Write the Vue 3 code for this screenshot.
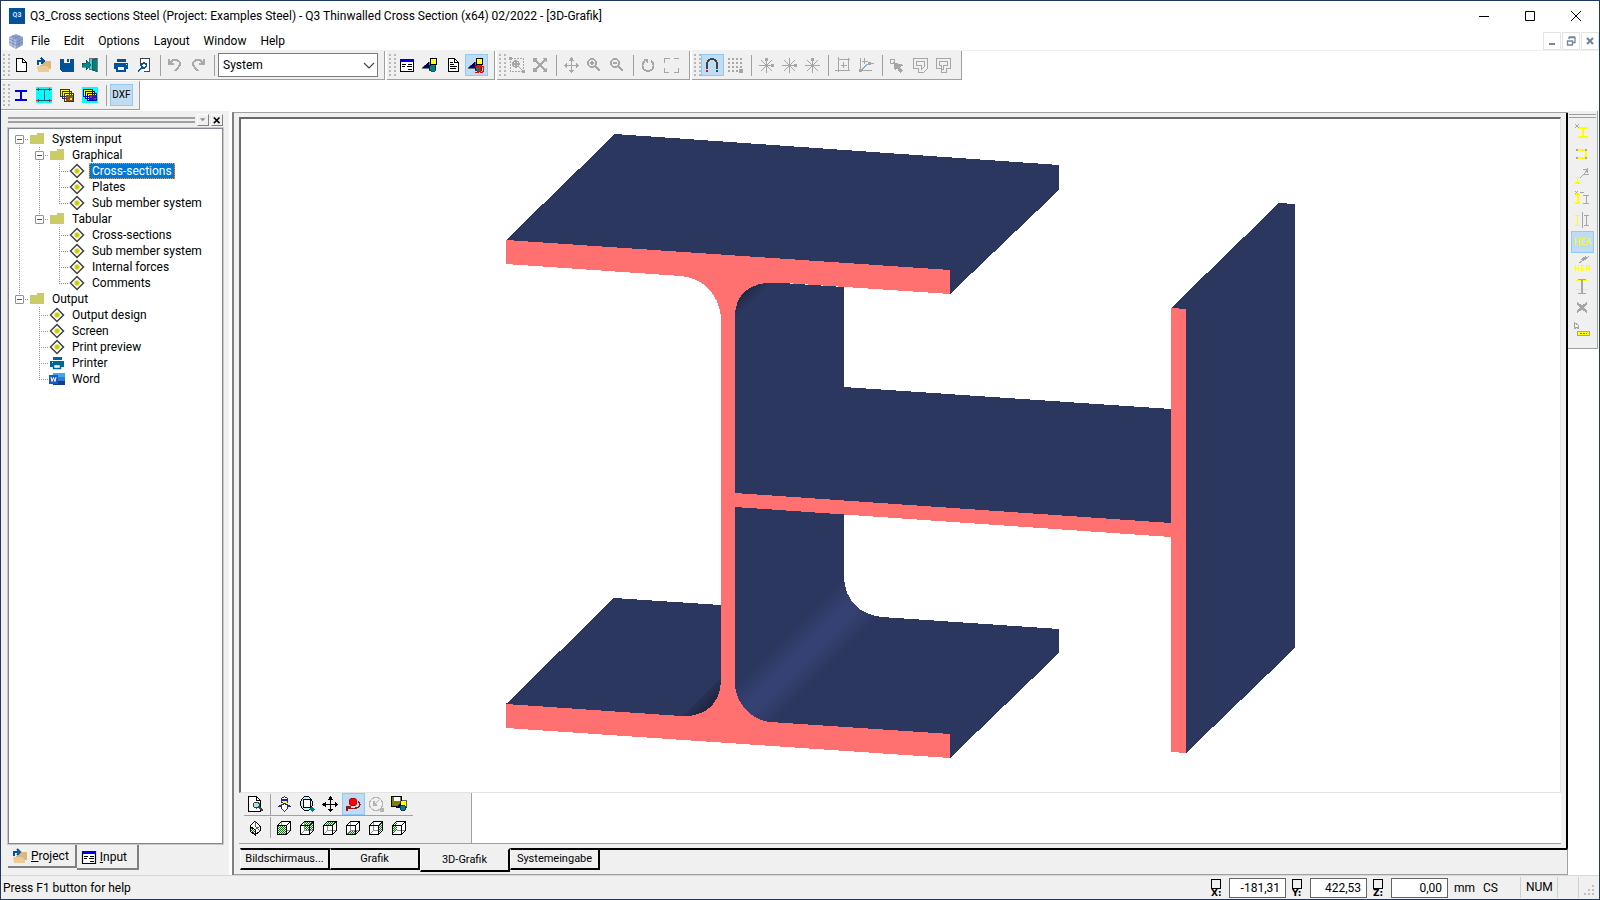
<script setup>
import { ref, h } from 'vue'

const G = '#a6a6a6'
const BLUE = '#00529b'
const YEL = '#ffff00'
const HATCH = 'url(#hatch)'

// every icon is a list of [path, fill, stroke, stroke width, dash] on a 16x16 grid
const cube = face => [
   ['M1.5 5.5l4-4h9v9l-4 4h-9z', '#fff', 'none'],
   ['M5.5 1.5v9h9M5.5 10.5l-4 4', 'none', '#909090'],
   [face, HATCH, 'none'],
   ['M1.5 5.5h9v9h-9zM1.5 5.5l4-4h9l-4 4M14.5 1.5v9l-4 4', 'none', '#000'],
]
const shapes = [
   ['M8.5 1.5h6v6h-6z', YEL, '#000'],
   ['M9 2h1v1h-1zM11 2h1v1h-1zM13 2h1v1h-1zM10 4h1v1h-1zM12 4h1v1h-1z', '#fff'],
   ['M0 11L7 5v6z', '#000080', '#000', 0.5],
   ['M7 11a3.5 3.5 0 1 0 7 0a3.5 3.5 0 1 0-7 0', '#008080', '#000', 0.7],
]
const star = [['M8.5 1v15M1 8.5h15M3 3l11 11M14 3L3 14', 'none', G]]

const icons = {
   doc: [
      ['M1 4l7-3 7 3v8l-7 4-7-4z', '#8fa3cc'],
      ['M1 4l7 3v9l-7-4z', '#b4c2df'],
      ['M1 6l7 3 7-3M1 9l7 3 7-3M4 2.5l7 3v8.5M12 3L5 6v8.5', 'none', '#6d83b4', 0.7],
   ],
   new: [['M3.5 1.5h6l4 4v9h-10z', '#fff', '#000', 1.2], ['M9.5 1.5v4h4', 'none', '#000', 1.2]],
   open: [
      ['M6 5h3V4h6v8H4V8h2z', '#deb77a'],
      ['M1 9h9l3 3v3H2z', '#eccb98'],
      ['M2 8V4h4M5 1l3 3-3 3', 'none', BLUE, 2],
   ],
   save: [['M1 2h14v13H3l-2-2z', BLUE], ['M5 1h6v5H5z', '#f0f0f0'], ['M8 2h2v3H8z', BLUE]],
   exit: [
      ['M7 1h8v12H7z', '#707070'],
      ['M8 2h6v10H8z', '#20e0e0'],
      ['M10 3l5-2v14l-5-2z', '#008080', '#303030', 0.6],
      ['M0 6h4V3l5 5-5 5v-3H0z', '#008c8c', '#303030', 0.5],
   ],
   print: [['M4 2h9v3H4z', BLUE], ['M1 6h14v6H1z', BLUE], ['M4 9h8v5H4z', '#fff', BLUE, 1.5], ['M13 7h1v1h-1z', '#fff']],
   preview: [
      ['M4.5 9V1.5h9v13h-6', '#fff', '#444'],
      ['M5.5 8.5a2.5 2.5 0 1 0 5 0a2.5 2.5 0 1 0-5 0', '#fff', BLUE, 1.5],
      ['M6 10.5l-4 4', 'none', BLUE, 2],
   ],
   undo: [['M2 2v5h5M3 6c3-5 10-3 10 1 0 3-3 4-5 7', 'none', '#a9a9a9', 2]],
   redo: [['M14 2v5H9M13 6C10 1 3 3 3 7c0 3 3 4 5 7', 'none', '#a9a9a9', 2]],
   form: [
      ['M1.5 2.5h13v12h-13z', '#fff', '#000', 1.2],
      ['M1 2h14v3H1z', '#0000e0'],
      ['M3 7.5h4M9 7.5h4M3 9.5h3M8 9.5h5M9 12.5h4', 'none', '#000'],
   ],
   shapes,
   text: [['M3.5 1.5h6l4 4v9h-10z', '#fff', '#000', 1.3], ['M9.5 1.5v4h4M5 5.5h3M5 7.500h4M5 9.500h7M5 11.500h6', 'none', '#000']],
   threeD: [...shapes, ['M7 9.500h3v6H7M8 12.500h2M12.500 9v6h2l1-1v-4l-1-1z', 'none', '#f00', 1]],
   zoomWin: [
      ['M1.5 1.5h13v13h-13z', 'none', G, 1, '2 1'],
      ['M0 0h3v3H0zM13 13h3v3h-3z', G],
      ['M4 7a3 3 0 1 0 6 0a3 3 0 1 0-6 0M9.5 9.5l4 4M7 5v4M5 7h4', 'none', G, 1.4],
   ],
   zoomAll: [['M3 3l10 10M13 3L3 13', 'none', G, 1.6], ['M1 1h4v1L2 5H1zM15 1h-4v1l3 3h1zM1 15h4v-1l-3-3H1zM15 15h-4v-1l3-3h1z', G]],
   pan: [['M8.5 2v13M2 8.5h13', 'none', G, 1.4], ['M8.5 0l3 4h-6zM8.5 16l3-3h-6zM1 8.5l3-3v6zM16 8.5l-3-3v6z', G]],
   zoomIn: [['M2 6a4 4 0 1 0 8 0a4 4 0 1 0-8 0M9 9l5 5M6 4v4M4 6h4', 'none', G, 1.8]],
   zoomOut: [['M2 6a4 4 0 1 0 8 0a4 4 0 1 0-8 0M9 9l5 5M4 6h4', 'none', G, 1.8]],
   rotate: [['M5 4a5.5 5.5 0 1 0 6 0', 'none', G, 1.8], ['M3 2h5v5z', G]],
   full: [['M1.5 6V1.500h5M11 1.500h5V6M15.500 11v4.500h-5M6 15.500H1.500V11', 'none', G, 1]],
   magnet: [['M3 12V7a5 5 0 0 1 10 0v5', 'none', '#444', 2], ['M2 13h2v2H2z', '#e0006c'], ['M12 13h2v2h-2z', BLUE]],
   grid: [
      ['M1 2h14M1 6h14M1 10h14M1 14h10', 'none', G, 2, '2 2'],
      ['M12 12h4v4h-4z', G],
   ],
   star1: [...star, ['M7 1h3v3H7zM13 7h3v3h-3z', G]],
   star2: [...star, ['M13 7h3v3h-3z', G]],
   star3: [...star, ['M7 1h3v3H7z', G]],
   axes: [['M3.5 0v15M0 13.5h15M3 2.5h12M13.5 1v13M8.500 5v6M6 8.500h6', 'none', G]],
   axes2: [['M2.5 1v14M1 13.5h13M6.500 1v6M4 4.500h6M11 6.500h5', 'none', G], ['M2 14l9-8', 'none', '#7fb2dc', 1.2], ['M1 12h3v3H1zM10 5h3v3h-3z', G]],
   pick: [['M1.5 2.5h4v4h-4z', 'none', G], ['M4 5l11 3-4 2 3 4-3 2-3-5-2 3z', G]],
   box1: [['M1.5 1.5h14v10l-4 4h-5v-4h-5z', 'none', G, 1.2], ['M4.500 4.500h8v5l-3 3v-4h-5z', 'none', G]],
   box2: [['M1.5 1.5h14v10h-4v4h-5v-4h-5z', 'none', G, 1.2], ['M4.500 4.500h8v4h-4v4h-2v-4h-2z', 'none', G]],
   section: [['M2 4.5h13M2 13.500h13', 'none', YEL, 1], ['M2 3.5h12M2 12.5h12M8 4v8', 'none', '#0000e0', 2]],
   section2: [
      ['M0 0h16v16H0z', '#00ffff'],
      ['M3 2.5h10M3 13.5h10M8.500 3v10', 'none', '#006070'],
      ['M0 2h3v1H0zM13 2h3v1h-3zM0 13h3v1H0zM13 13h3v1h-3zM2 1h1v3H2zM13 1h1v3h-1zM2 12h1v3H2zM13 12h1v3h-1z', '#c02020'],
   ],
   layers: [
      ['M1.5 2.5h9v7h-9zM3.5 4.5h9v7h-9zM5.5 6.5h9v8h-9z', YEL, '#303060'],
      ['M7 8h7v6H7z', '#c03020'],
      ['M8 9h2v2H8zM12 9h2v2h-2zM9 12h2v2H9z', '#10a030'],
      ['M11 11h2v2h-2z', YEL],
   ],
   layers2: [
      ['M0 0h16v16H0z', '#00ffff'],
      ['M1.5 2.5h9v7h-9zM3.5 4.5h9v7h-9zM5.5 6.5h9v7h-9z', YEL, '#0000c0'],
      ['M7 8h7v5H7z', '#2020c0'],
      ['M8 9h2v2H8zM12 11h2v2h-2z', '#c02060'],
   ],
   folder: [['M1 4h7V2h7v11H1z', '#cccc66']],
   leaf: [['M8 1.5L14.5 8 8 14.5 1.5 8z', '#fff', '#404040', 1.5], ['M5.5 6.5h1v-1h3v1h1v3h-1v1h-3v-1h-1z', '#cccc00']],
   printer: [['M4 2h9v3H4z', '#006699'], ['M1 6h14v6H1z', '#006699'], ['M4.5 9.5h7v4h-7z', '#fff', '#006699', 1.5], ['M3 7h1v1H3z', '#fff']],
   word: [
      ['M4 2h12v4H4z', '#41a5ee'],
      ['M4 6h12v4H4z', '#2b7cd3'],
      ['M4 10h12v4H4z', '#103f91'],
      ['M0 4h9v9H0z', '#185abd'],
      ['M2 6l1 4.5 1.5-4 1.5 4L7 6', 'none', '#fff'],
   ],
   find: [
      ['M1.500 0.500h8l4 4v11h-12z', '#fff', '#000'],
      ['M9.500 0.500v4h4', 'none', '#000'],
      ['M6.500 9a3 3 0 1 0 6 0a3 3 0 1 0-6 0', '#a0e8f0', '#404040'],
      ['M12 11l4 4', 'none', '#404040', 2],
   ],
   lamp: [
      ['M8.500 0.500l3 2v4h-6v-4z', '#fff', '#303060'],
      ['M6 3h6v2H6z', '#2020a0'],
      ['M7 5h4v2H7z', YEL],
      ['M8.500 7.500l6 3h-3v2l-3 3-3-3v-2h-3z', '#fff', '#303060'],
   ],
   zoom3d: [
      ['M1.500 7.500a6 7 0 1 0 12 0a6 7 0 1 0-12 0', '#b8f4f8', '#000'],
      ['M4.500 3.500h7v8h-7z', '#fff', '#000'],
      ['M12 12l3 3', 'none', '#008080', 3],
   ],
   move: [['M8.500 2v13M2 8.500h13', 'none', '#000'], ['M8.500 0l3 4h-6zM8.500 16l3-3h-6zM0 8.500l4-3v6zM16 8.500l-3-3v6z', '#000']],
   orbit: [
      ['M4 6a4 4 0 1 0 8 0a4 4 0 1 0-8 0', '#f00', '#800000', 0.6],
      ['M13 5c5 4 0 9-10 7M2 15v-4h4', 'none', '#901818', 1.4],
   ],
   orbitOff: [['M1.500 8a6.500 6.500 0 1 0 13 0a6.500 6.500 0 1 0-13 0M5 10l6-6M6 5v4h3', 'none', '#b4b4b4', 1.2], ['M12 12h4v4h-4z', '#b4b4b4']],
   saveView: [
      ['M0.500 0.500h10v10h-10z', '#808000', '#000'],
      ['M3 1h6v4H3z', '#fff'],
      ['M9.500 4.500h6v7h-6z', YEL, '#000', 0.6],
      ['M4 12l6-6v6z', '#000080'],
      ['M9 12a3 3 0 1 0 6 0a3 3 0 1 0-6 0', '#008080', '#000', 0.5],
   ],
   iso: [
      ['M8 1l5 5v5l-5 4-5-4V6z', '#fff', '#000'],
      ['M3 6l5 4v5l-5-4z', HATCH, '#000'],
      ['M8 10l5-4M8 1v5l5 5', 'none', '#606060'],
   ],
   front: cube('M1 5h9v9H1z'),
   back: cube('M6 2h8v8H6z'),
   top: cube('M1.5 5.5l4-4h9l-4 4z'),
   bottom: cube('M1.5 14.5l4-4h9l-4 4z'),
   right: cube('M10.5 5.5l4-4v9l-4 4z'),
   left: cube('M1.5 5.5l4-4v9l-4 4z'),
   yNew: [['M4 4h10M4 13h10M9 4v9', 'none', YEL, 2], ['M1 0l4 4M5 0L1 4', 'none', G]],
   yTurn: [['M4 4h8M12 4v8H4', 'none', YEL, 2], ['M2 3h2v2H2zM11 3h2v2h-2zM2 11h2v2H2zM11 11h2v2h-2z', G]],
   yMove: [['M1 9.500h5M1 15h5M3.500 9v6', 'none', YEL, 1.6], ['M6 10l4-4M9 1.500h5M14 1l-4 5h5M13 0v5', 'none', G]],
   yCopy: [['M1 5h5M1 13h5M4 5v8', 'none', YEL, 2], ['M9 5.500h6M9 13.500h6M12.500 5v8M1 1l3 3M4 1L1 4M6 2.500h4', 'none', G]],
   yMirror: [['M1 3.500h5M1 13.500h5M3.500 3v10', 'none', YEL, 1.6], ['M8.500 0v16M10 3.500h5M10 13.500h5M12.500 3v10', 'none', G]],
   yHammer: [['M1.500 9v6M4.500 9v6M1 12h3M10 9.500H7v5h3M7 12h3M12.500 15v-5l1-1h1l1 1v5M12 12.500h3', 'none', YEL], ['M3 8l4-4 1 2zM7 3l5-3v1l4-1-5 4-3 1z', G]],
   ySize: [['M2 2.500h12M2 11.500h12', 'none', YEL], ['M4 1.500h8M4 15.500h8M8 2v13', 'none', G, 1.3]],
   cross: [['M3 3l10 9M13 3L3 12', 'none', G, 2.5]],
   yRule: [['M0.500 0.500l4 3v3l-2-1-2 1z', '#fff', G], ['M3.500 9.500h12v4h-12z', YEL, G], ['M6 11.500h7', 'none', '#808000', 1, '2 1']],
   chevron: [['M3 6l5 5 5-5', 'none', '#444', 1.2]],
   min: [['M3 8.500h10', 'none', '#000']],
   max: [['M3.500 3.500h9v9h-9z', 'none', '#000']],
   close: [['M3 3l10 10M13 3L3 13', 'none', '#000']],
   mdiMin: [['M5 11h6', 'none', '#75869c', 2]],
   mdiRestore: [['M6 6V4.500h6v5h-2M4.500 8h5v4h-5zM6 4h6M4 8h6', 'none', '#75869c', 1.3]],
   mdiClose: [['M5 5l6 6M11 5l-6 6', 'none', '#75869c', 2.2]],
   down: [['M3 5h9l-4.500 5z', '#909090']],
   x: [['M3 4l9 9M12 4l-9 9', 'none', '#000', 2.5]],
}

function Icon({ name, size = 16 }) {
   return h('svg', { class: 'icon', width: size, height: size, viewBox: '0 0 16 16', 'aria-hidden': 'true' },
      icons[name].map(([d, fill, stroke, width, dash]) =>
         h('path', { d, fill, stroke: stroke || 'none', 'stroke-width': width || 1, 'stroke-dasharray': dash })
      )
   )
}
Icon.props = ['name', 'size']

const menus = ['File', 'Edit', 'Options', 'Layout', 'Window', 'Help']

// '|' is a separator
const fileTools = ['new', 'open', 'save', 'exit', '|', 'print', 'preview', '|', 'undo', 'redo', '|']
const toolGroups = [
   ['form', 'shapes', 'text', 'threeD'],
   ['zoomWin', 'zoomAll', '|', 'pan', 'zoomIn', 'zoomOut', '|', 'rotate', 'full'],
   ['magnet', 'grid', '|', 'star1', 'star2', 'star3', '|', 'axes', 'axes2', '|', 'pick', 'box1', 'box2'],
]
const sectionTools = ['section', 'section2', 'layers', 'layers2', '|']
const sideTools = ['yNew', 'yTurn', 'yMove', 'yCopy', 'yMirror', 'HEA', 'yHammer', 'ySize', 'cross', 'yRule']
const viewTools = ['find', '|', 'lamp', 'zoom3d', 'move', 'orbit', 'orbitOff', 'saveView']
const cubeTools = ['iso', '|', 'front', 'back', 'top', 'bottom', 'right', 'left']
const pressed = ['threeD', 'magnet', 'orbit', 'HEA']

// guides: one entry per column left of the icon.
// line = passes through, tee = branch, end = last branch, box = expander
const tree = [
   { label: 'System input', icon: 'folder', guides: ['box first'] },
   { label: 'Graphical', icon: 'folder', guides: ['line', 'box'] },
   { label: 'Cross-sections', icon: 'leaf', guides: ['line', 'line', 'tee'] },
   { label: 'Plates', icon: 'leaf', guides: ['line', 'line', 'tee'] },
   { label: 'Sub member system', icon: 'leaf', guides: ['line', 'line', 'end'] },
   { label: 'Tabular', icon: 'folder', guides: ['line', 'box last'] },
   { label: 'Cross-sections', icon: 'leaf', guides: ['line', 'gap', 'tee'] },
   { label: 'Sub member system', icon: 'leaf', guides: ['line', 'gap', 'tee'] },
   { label: 'Internal forces', icon: 'leaf', guides: ['line', 'gap', 'tee'] },
   { label: 'Comments', icon: 'leaf', guides: ['line', 'gap', 'end'] },
   { label: 'Output', icon: 'folder', guides: ['box last'] },
   { label: 'Output design', icon: 'leaf', guides: ['gap', 'tee'] },
   { label: 'Screen', icon: 'leaf', guides: ['gap', 'tee'] },
   { label: 'Print preview', icon: 'leaf', guides: ['gap', 'tee'] },
   { label: 'Printer', icon: 'printer', guides: ['gap', 'tee'] },
   { label: 'Word', icon: 'word', guides: ['gap', 'end'] },
]
const selected = ref(2)

const viewTabs = ['Bildschirmaus...', 'Grafik', '3D-Grafik', 'Systemeingabe']
const activeTab = ref('3D-Grafik')

const system = ref('System')
const coords = ref([
   { axis: 'X', value: '-181,31' },
   { axis: 'Y', value: '422,53' },
   { axis: 'Z', value: '0,00' },
])
</script>

<template>
   <div class="window">

      <!-- title bar -->
      <header class="title-bar">
         <span class="app-logo">Q3</span>
         <h1 class="title">Q3_Cross sections Steel (Project: Examples Steel) - Q3 Thinwalled Cross Section (x64) 02/2022 - [3D-Grafik]</h1>
         <button v-for="n in ['min', 'max', 'close']" :key="n" class="caption-btn" :aria-label="n"><Icon :name="n" /></button>
      </header>

      <!-- menu -->
      <nav class="menu-bar">
         <Icon name="doc" />
         <button v-for="m in menus" :key="m" class="menu-item">{{ m }}</button>
         <div class="mdi-buttons">
            <button v-for="n in ['mdiMin', 'mdiRestore', 'mdiClose']" :key="n" class="mdi-btn" :aria-label="n"><Icon :name="n" /></button>
         </div>
      </nav>

      <!-- toolbars -->
      <div class="toolbar-row">
         <div class="toolbar">
            <span class="grip" />
            <template v-for="(t, i) in fileTools" :key="i">
               <span v-if="t === '|'" class="sep" />
               <button v-else class="tool" :aria-label="t"><Icon :name="t" /></button>
            </template>
            <div class="combo">
               <select v-model="system" aria-label="System">
                  <option>System</option>
               </select>
               <Icon name="chevron" />
            </div>
         </div>
         <div v-for="(group, gi) in toolGroups" :key="gi" class="toolbar">
            <span class="grip" />
            <template v-for="(t, i) in group" :key="i">
               <span v-if="t === '|'" class="sep" />
               <button v-else class="tool" :class="{ pressed: pressed.includes(t) }" :aria-label="t"><Icon :name="t" /></button>
            </template>
         </div>
      </div>
      <div class="toolbar-row">
         <div class="toolbar">
            <span class="grip" />
            <template v-for="(t, i) in sectionTools" :key="i">
               <span v-if="t === '|'" class="sep" />
               <button v-else class="tool" :aria-label="t"><Icon :name="t" /></button>
            </template>
            <button class="tool pressed dxf">DXF</button>
         </div>
      </div>

      <main class="work">
         <!-- tree dock -->
         <aside class="dock">
            <div class="dock-head">
               <span class="dock-bars" />
               <button class="dock-btn" aria-label="Menu"><Icon name="down" :size="10" /></button>
               <button class="dock-btn" aria-label="Close"><Icon name="x" :size="10" /></button>
            </div>
            <ul class="tree">
               <li v-for="(node, i) in tree" :key="i" class="node" @click="selected = i">
                  <span v-for="(g, gi) in node.guides" :key="gi" class="guide" :class="g">
                     <button v-if="g.startsWith('box')" class="expander" aria-label="Collapse" />
                  </span>
                  <span class="node-icon"><Icon :name="node.icon" /></span>
                  <span class="node-label" :class="{ selected: selected === i }">{{ node.label }}</span>
               </li>
            </ul>
            <div class="dock-tabs">
               <button class="dock-tab"><Icon name="open" /><span><u>P</u>roject</span></button>
               <button class="dock-tab active"><Icon name="form" /><span><u>I</u>nput</span></button>
            </div>
         </aside>

         <!-- document area -->
         <section class="mdi">
            <div class="document">
               <svg class="scene" viewBox="241 119 1319 672" preserveAspectRatio="xMinYMin meet" role="img" aria-label="3D-Grafik">
                  <defs>
                     <pattern id="hatch" width="2" height="2" patternUnits="userSpaceOnUse">
                        <path d="M0 0h2v2H0z" fill="#e8f4e8" />
                        <path d="M0 0h1v1H0zM1 1h1v1H1z" fill="#008000" />
                     </pattern>
                     <linearGradient id="fillet" gradientUnits="userSpaceOnUse" x1="735" y1="686" x2="772" y2="723">
                        <stop offset="0" stop-color="#2c3760" />
                        <stop offset="0.4" stop-color="#354172" />
                        <stop offset="0.6" stop-color="#354172" />
                        <stop offset="1" stop-color="#2c3760" />
                     </linearGradient>
                     <linearGradient id="shade-left" gradientUnits="userSpaceOnUse" x1="698" y1="694" x2="713" y2="709">
                        <stop offset="0" stop-color="#2c3760" />
                        <stop offset="1" stop-color="#1b2136" />
                     </linearGradient>
                     <linearGradient id="shade-top" gradientUnits="userSpaceOnUse" x1="742" y1="290" x2="753" y2="301">
                        <stop offset="0" stop-color="#1f263e" />
                        <stop offset="1" stop-color="#2c3760" />
                     </linearGradient>
                  </defs>
                  <!-- surfaces running back from the section -->
                  <g fill="#2c3760">
                     <path d="M506 240L615 134L1059 165V190L950 294V270z" />
                     <path d="M735 280L844 287V578C845 600 860 615 882 617L1059 629V653L950 758V734L735 724z" />
                     <path d="M735 380L844 387L1171 409V524L735 494z" />
                     <path d="M506 704L614 598L721 605V718H681z" />
                     <path d="M1171 308L1279 203L1295 204V648L1186 753V309z" />
                  </g>
                  <path d="M735 686L844 578C845 600 860 615 882 617L774 723H735z" fill="url(#fillet)" />
                  <path d="M681 717L721 678V717z" fill="url(#shade-left)" />
                  <path d="M735 318V280H773z" fill="url(#shade-top)" />
                  <!-- cut face -->
                  <g fill="#ff7171">
                     <path d="M506 240L950 270V294L785 283H766C748 285 735 296 735 316V686C737 705 752 720 770 722L950 734V758L506 728V704L681 716C704 717 719 706 721 682V317C719 295 704 278 681 276L506 264z" />
                     <path d="M735 493L1171 523V537L735 507z" />
                     <path d="M1171 308L1186 309V753L1171 752z" />
                  </g>
               </svg>
               <div class="view-strip">
                  <div class="view-tools">
                     <div v-for="(row, ri) in [viewTools, cubeTools]" :key="ri" class="view-row">
                        <template v-for="(t, i) in row" :key="i">
                           <span v-if="t === '|'" class="sep" />
                           <button v-else class="tool" :class="{ pressed: pressed.includes(t) }" :aria-label="t"><Icon :name="t" /></button>
                        </template>
                     </div>
                  </div>
               </div>
            </div>
            <div class="view-tabs">
               <button
                  v-for="t in viewTabs"
                  :key="t"
                  class="view-tab"
                  :class="{ active: t === activeTab }"
                  @click="activeTab = t"
               >{{ t }}</button>
               <span class="tabs-rest" />
            </div>
         </section>

         <!-- right toolbar -->
         <div class="side-bar">
            <span class="side-grip" />
            <button v-for="t in sideTools" :key="t" class="tool" :class="{ pressed: pressed.includes(t) }" :aria-label="t">
               <span v-if="t === 'HEA'" class="hea">HEA</span>
               <Icon v-else :name="t" />
            </button>
         </div>
      </main>

      <!-- status bar -->
      <footer class="status">
         <span class="hint">Press F1 button for help</span>
         <div v-for="c in coords" :key="c.axis" class="coord">
            <label class="axis"><input type="checkbox" class="axis-check">{{ c.axis }}:</label>
            <input v-model="c.value" class="coord-input" type="text" :aria-label="c.axis">
         </div>
         <span class="unit">mm</span>
         <span class="unit">CS</span>
         <span class="cell" />
         <span class="cell num">NUM</span>
         <span class="cell" />
         <svg class="size-grip" width="12" height="12" viewBox="0 0 12 12">
            <path d="M8 0h2v2H8zM4 4h2v2H4zM8 4h2v2H8zM0 8h2v2H0zM4 8h2v2H4zM8 8h2v2H8z" fill="#bfbfbf" />
         </svg>
      </footer>
   </div>
</template>

<style>
body {
   margin: 0;
}
</style>

<style scoped>
.window {
   box-sizing: border-box;
   display: flex;
   flex-direction: column;
   height: 100vh;
   border: 1px solid #1f3864;
   background: #fff;
   color: #000;
   font-family: Roboto, "Noto Sans", sans-serif;
   font-size: 12px;
   line-height: 16px;
   user-select: none;
}

button,
input,
select {
   box-sizing: border-box;
   margin: 0;
   padding: 0;
   border: 0;
   border-radius: 0;
   background: none;
   color: inherit;
   font: inherit;
}

.icon {
   display: block;
   flex-shrink: 0;
}

/* ── Title ── */
.title-bar {
   display: flex;
   align-items: center;
   height: 30px;
   padding-left: 8px;
}

.app-logo {
   width: 16px;
   height: 16px;
   background: #00529b;
   color: #cfe3f5;
   font-size: 7px;
   font-weight: 700;
   line-height: 14px;
   text-align: center;
}

.title {
   flex: 1;
   margin: 0 0 0 5px;
   font-size: 12px;
   font-weight: 400;
}

.caption-btn {
   display: flex;
   align-items: center;
   justify-content: center;
   width: 46px;
   height: 30px;
}

/* ── Menu ── */
.menu-bar {
   display: flex;
   align-items: center;
   height: 19px;
   padding-left: 7px;
   border-bottom: 1px solid #f0f0f0;
}

.menu-item {
   padding: 0 7px;
}

.mdi-buttons {
   display: flex;
   gap: 1px;
   margin-left: auto;
}

.mdi-btn {
   display: flex;
   align-items: center;
   justify-content: center;
   width: 18px;
   height: 18px;
   border: 1px solid #e4e4e4;
}

/* ── Toolbars ── */
.toolbar-row {
   display: flex;
   gap: 2px;
   height: 29px;
   margin-bottom: 1px;
}

.toolbar {
   display: flex;
   align-items: center;
   padding-right: 6px;
   border-right: 1px solid #a0a0a0;
   border-bottom: 1px solid #a0a0a0;
   background: #f0f0f0;
}

.grip {
   width: 9px;
   height: 24px;
   background: radial-gradient(circle at 2px 2px, #b8b8b8 1px, transparent 1px) 1px 0 / 5px 4px;
}

.sep {
   width: 1px;
   height: 21px;
   margin: 0 3px 0 4px;
   background: #a0a0a0;
}

.tool {
   display: flex;
   align-items: center;
   width: 23px;
   height: 22px;
   padding-left: 2px;
   border: 1px solid transparent;
   shape-rendering: crispEdges;
}

.tool.pressed {
   border-color: #90c8f6;
   background: #c0dcf3;
}

.tool.dxf {
   justify-content: center;
   padding: 0;
   font-size: 10px;
}

.combo {
   display: flex;
   align-items: center;
   width: 160px;
   height: 24px;
   box-sizing: border-box;
   border: 1px solid #7a7a7a;
   background: #fff;
}

.combo select {
   flex: 1;
   height: 22px;
   padding-left: 4px;
   appearance: none;
}

/* ── Work area ── */
.work {
   flex: 1;
   display: flex;
   min-height: 0;
}

.dock {
   display: flex;
   flex-direction: column;
   width: 228px;
   padding: 0 6px 2px 7px;
   box-sizing: border-box;
   background: #f0f0f0;
}

.dock-head {
   display: flex;
   align-items: center;
   gap: 2px;
   height: 17px;
}

.dock-bars {
   flex: 1;
   height: 2px;
   border-top: 2px solid #a0a0a0;
   border-bottom: 2px solid #a0a0a0;
}

.dock-btn {
   display: flex;
   align-items: center;
   justify-content: center;
   width: 12px;
   height: 12px;
   border: 1px solid;
   border-color: #fff #808080 #808080 #fff;
}

.tree {
   flex: 1;
   margin: 0;
   padding: 2px 0;
   border: 1px solid #828790;
   outline: 1px solid #c8c8c8;
   background: #fff;
   list-style: none;
}

.node {
   display: flex;
   height: 16px;
}

.guide {
   display: flex;
   align-items: center;
   justify-content: center;
   width: 20px;
   background-repeat: no-repeat;
}

.line,
.tee,
.end,
.box {
   --v: repeating-linear-gradient(#909090 0 1px, transparent 1px 2px);
   --h: repeating-linear-gradient(90deg, #909090 0 1px, transparent 1px 2px);
}

.line {
   background-image: var(--v);
   background-size: 1px 16px;
   background-position: 10px 0;
}

.tee,
.box {
   background-image: var(--v), var(--h);
   background-size: 1px 16px, 10px 1px;
   background-position: 10px 0, 10px 8px;
}

.end,
.box.last {
   background-image: var(--v), var(--h);
   background-size: 1px 9px, 10px 1px;
   background-position: 10px 0, 10px 8px;
}

.box.first {
   background-position: 10px 8px, 10px 8px;
}

.expander {
   width: 9px;
   height: 9px;
   border: 1px solid #919191;
   border-radius: 1px;
   background: linear-gradient(#3355aa, #3355aa) center / 5px 1px no-repeat, #fff;
}

.node-icon {
   display: flex;
   align-items: center;
   width: 20px;
}

.node-label {
   padding: 0 3px;
   white-space: nowrap;
}

.node-label.selected {
   outline: 1px dotted #ff9a33;
   outline-offset: -1px;
   background: #0078d7;
   color: #fff;
}

.dock-tabs {
   display: flex;
   align-items: flex-start;
   height: 28px;
   padding-top: 1px;
}

.dock-tab {
   display: flex;
   align-items: center;
   gap: 3px;
   height: 23px;
   padding: 0 6px 0 4px;
   border-right: 2px solid #808080;
   border-bottom: 2px solid #808080;
}

.dock-tab.active {
   height: 25px;
   padding-right: 10px;
}

/* ── Document ── */
.mdi {
   flex: 1;
   display: flex;
   flex-direction: column;
   min-width: 0;
   margin: 1px 0 0 3px;
   border-top: 1px solid #a0a0a0;
   border-left: 2px solid #808080;
   background: #f0f0f0;
}

.document {
   flex: 1;
   display: flex;
   flex-direction: column;
   min-height: 0;
   padding: 4px 5px;
   border-right: 2px solid #000;
}

.scene {
   flex: 1;
   min-height: 0;
   width: 100%;
   box-sizing: border-box;
   border-top: 2px solid #696969;
   border-left: 2px solid #696969;
   border-right: 1px solid #e3e3e3;
   border-bottom: 1px solid #e3e3e3;
   background: #fff;
   shape-rendering: crispEdges;
}

.view-strip {
   display: flex;
   border-bottom: 1px solid #a0a0a0;
   background: #fff;
}

.view-tools {
   width: 233px;
   box-sizing: border-box;
   padding: 0 0 4px 5px;
   border-right: 1px solid #a0a0a0;
   background: #f0f0f0;
}

.view-row {
   display: flex;
   align-items: center;
   box-sizing: border-box;
   width: 169px;
   height: 23px;
}

.view-row:first-child {
   border-bottom: 1px solid #a0a0a0;
}

.view-row .sep {
   margin: 0 2px 0 3px;
}

/* ── View tabs ── */
.view-tabs {
   display: flex;
   height: 26px;
   padding-left: 6px;
   border-bottom: 1px solid #a0a0a0;
   font-size: 11px;
}

.view-tab {
   width: 90px;
   height: 22px;
   border-top: 2px solid #000;
   border-right: 2px solid #000;
   border-bottom: 2px solid #000;
   border-left: 1px solid #fff;
   white-space: nowrap;
}

.view-tab.active {
   height: 24px;
   border-top-color: #f0f0f0;
}

.tabs-rest {
   flex: 1;
   border-top: 2px solid #000;
   border-right: 1px solid #a0a0a0;
}

/* ── Right toolbar ── */
.side-bar {
   align-self: flex-start;
   display: flex;
   flex-direction: column;
   align-items: center;
   width: 30px;
   box-sizing: border-box;
   margin-right: 1px;
   padding-bottom: 7px;
   border-right: 1px solid #a0a0a0;
   border-bottom: 1px solid #a0a0a0;
   background: #f0f0f0;
}

.side-grip {
   width: 27px;
   height: 2px;
   margin: 3px 0 3px;
   border-top: 1px solid #a0a0a0;
   border-bottom: 1px solid #a0a0a0;
}

.hea {
   color: #ffff00;
   font-size: 9px;
}

/* ── Status bar ── */
.status {
   display: flex;
   align-items: center;
   height: 23px;
   padding-left: 2px;
   border-top: 1px solid #d7d7d7;
   background: #f0f0f0;
}

.hint {
   flex: 1;
}

.coord {
   display: flex;
   align-items: center;
   gap: 6px;
   margin-right: 6px;
}

.axis {
   display: flex;
   flex-direction: column;
   align-items: flex-start;
   width: 12px;
   font-family: "DejaVu Sans", sans-serif;
   font-size: 9px;
   font-weight: 700;
   line-height: 8px;
}

.axis-check {
   width: 10px;
   height: 10px;
   border: 1px solid #000;
   appearance: none;
}

.coord-input {
   width: 57px;
   height: 20px;
   padding-right: 5px;
   border: 1px solid #646464;
   background: #fff;
   text-align: right;
}

.unit {
   width: 29px;
}

.unit + .unit {
   width: 17px;
}

.cell {
   box-sizing: border-box;
   width: 21px;
   height: 21px;
   border-right: 1px solid #d0d0d0;
}

.cell.num {
   width: 37px;
   padding: 2px 4px 0 5px;
}

.size-grip {
   margin: 6px 3px 0 5px;
}
</style>
